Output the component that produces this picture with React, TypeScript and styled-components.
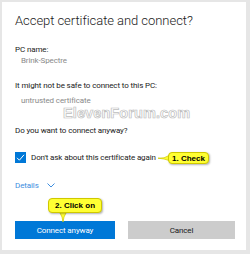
import React from "react";
import styled, { createGlobalStyle } from "styled-components";

const Global = createGlobalStyle`
  html, body { margin: 0; padding: 0; background: #e6e6e6; }
  body { width: 250px; height: 254px; overflow: hidden; }
`;

const Dialog = styled.div`
  position: relative;
  margin: 2px 4px 4px 2px;
  height: 248px;
  background: #ffffff;
  box-sizing: border-box;
  padding: 10px 9px 0 13px;
  display: flex;
  flex-direction: column;
  font-family: Roboto, "Open Sans", sans-serif;
  font-size: 8px;
  letter-spacing: -0.12px;
  line-height: 11px;
  color: #1a1a1a;
`;

const Title = styled.h1`
  margin: 0 0 14px;
  font-size: 13px;
  font-weight: 300;
  letter-spacing: -0.05px;
  line-height: 18px;
`;

const Field = styled.section<{ $gap: number }>`
  display: flex;
  flex-direction: column;
  gap: ${(p) => p.$gap}px;
  margin-bottom: 14px;
`;

const Label = styled.div``;

const Value = styled.div`
  padding-left: 6px;
  color: #8a8a8a;
`;

const Question = styled.div`
  margin-top: 5px;
`;

const CheckRow = styled.label`
  display: flex;
  align-items: center;
  gap: 5px;
  height: 11px;
  margin-top: 16px;
`;

const Box = styled.span`
  width: 11px;
  height: 11px;
  background: #0078d7;
  display: flex;
  align-items: center;
  justify-content: center;
`;

const DetailsRow = styled.div`
  display: flex;
  align-items: center;
  gap: 8px;
  margin-top: 17px;
  color: #3d8ee0;
`;

const Buttons = styled.div`
  display: flex;
  gap: 13px;
  margin-top: 30px;
`;

const Button = styled.div<{ $primary?: boolean }>`
  flex: 0 0 ${(p) => (p.$primary ? 100 : 107)}px;
  height: 18px;
  display: flex;
  align-items: center;
  justify-content: center;
  background: ${(p) => (p.$primary ? "#0078d7" : "#cccccc")};
  color: ${(p) => (p.$primary ? "#ffffff" : "#1a1a1a")};
`;

const Watermark = styled.div`
  position: absolute;
  left: 61px;
  top: 103px;
  font-family: "Liberation Sans", Arial, sans-serif;
  font-weight: bold;
  font-size: 14.5px;
  line-height: 16px;
  letter-spacing: 0.1px;
  color: #ffffff;
  -webkit-text-stroke: 0.7px #bdbdbd;
  pointer-events: none;
`;

const Callout = styled.div<{ $left: number; $top: number; $pad: number; $h: number }>`
  position: absolute;
  left: ${(p) => p.$left}px;
  top: ${(p) => p.$top}px;
  box-sizing: border-box;
  padding: 0 ${(p) => p.$pad}px;
  height: ${(p) => p.$h}px;
  display: flex;
  align-items: center;
  background: #ffff33;
  border: 1px solid #cfc800;
  border-radius: 4px;
  box-shadow: 1px 1px 2px rgba(0, 0, 0, 0.3);
  font-family: "Liberation Sans", Arial, sans-serif;
  font-weight: bold;
  font-size: 8px;
  letter-spacing: 0;
  color: #000;
  white-space: nowrap;
`;

const Pointer = styled.svg<{ $left: number; $top: number }>`
  position: absolute;
  left: ${(p) => p.$left}px;
  top: ${(p) => p.$top}px;
  overflow: visible;
`;

export default function App() {
  return (
    <>
      <Global />
      <Dialog>
        <Title>Accept certificate and connect?</Title>
        <Field $gap={0}>
          <Label>PC name:</Label>
          <Value>Brink-Spectre</Value>
        </Field>
        <Field $gap={4}>
          <Label>It might not be safe to connect to this PC:</Label>
          <Value>untrusted certificate</Value>
        </Field>
        <Question>Do you want to connect anyway?</Question>
        <CheckRow>
          <Box>
            <svg width="9" height="9" viewBox="0 0 9 9">
              <path d="M1 4.8 L3.4 7.2 L8 1.8" fill="none" stroke="#fff" strokeWidth="1" />
            </svg>
          </Box>
          Don't ask about this certificate again
        </CheckRow>
        <DetailsRow>
          Details
          <svg width="8" height="5" viewBox="0 0 8 5">
            <path d="M0.5 0.5 L4 4 L7.5 0.5" fill="none" stroke="#3d8ee0" strokeWidth="1" />
          </svg>
        </DetailsRow>
        <Buttons>
          <Button $primary>Connect anyway</Button>
          <Button>Cancel</Button>
        </Buttons>
        <Watermark>ElevenForum.com</Watermark>
        <Pointer $left={156} $top={152} width="12" height="8">
          <path d="M11 1.5 L6 3.8 L0 4.2 L6 5 L11 6.5 Z" fill="#ffff33" stroke="#cfc800" strokeWidth="0.7" />
        </Pointer>
        <Callout $left={166} $top={150} $pad={3} $h={12}>1. Check</Callout>
        <Pointer $left={56} $top={209} width="10" height="12">
          <path d="M1 0 L4 6 L5 11 L6 6 L9 0 Z" fill="#ffff33" stroke="#cfc800" strokeWidth="0.7" />
        </Pointer>
        <Callout $left={46} $top={196} $pad={6} $h={15}>2. Click on</Callout>
      </Dialog>
    </>
  );
}
